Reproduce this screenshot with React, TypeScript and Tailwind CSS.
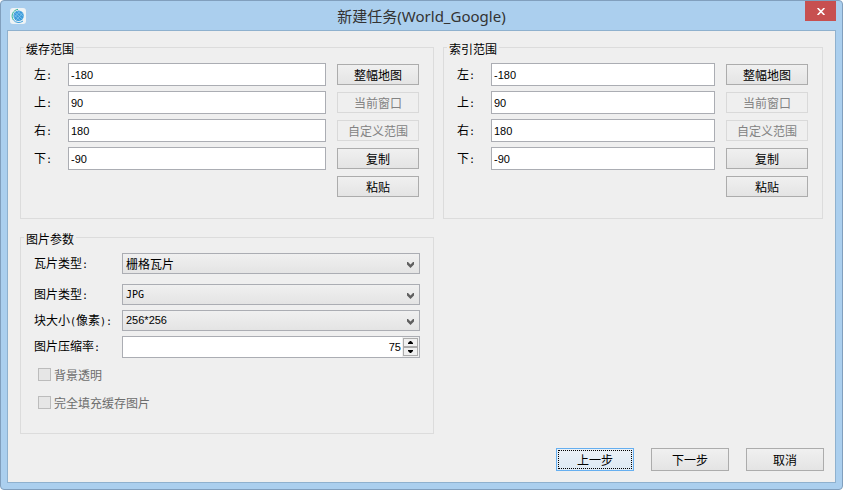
import { useState, type ReactNode } from "react";

const cjk = "font-['Noto_Sans_CJK_SC',sans-serif]";
const latin = "font-['DejaVu_Sans_Mono','Noto_Sans_CJK_SC',monospace] text-[10px]";
const digits = "font-['Liberation_Sans','Noto_Sans_CJK_SC',sans-serif] text-[11px]";

function Half({ children }: { children: ReactNode }) {
  return <span className={latin}>{children}</span>;
}

function AppIcon() {
  return (
    <svg className="size-4" viewBox="0 0 16 16" aria-hidden="true">
      <rect width="16" height="16" rx="3" fill="#eef3f5" />
      <circle cx="8.6" cy="7.8" r="5.2" fill="#3a9ada" />
      <path
        d="M3.8 6.4 L10.5 12.6 M4.8 4.4 L12.8 11.4 M7 2.9 L13.6 8.6 M3.9 9.8 L10.4 3 M6 12.2 L12.8 4.8"
        stroke="#8ccdf0"
        strokeWidth="0.7"
        fill="none"
      />
      <path d="M8 1.3 A6.8 6.8 0 0 0 3.4 12" stroke="#2fb596" strokeWidth="1" fill="none" />
      <path d="M3.4 12 A6.8 6.8 0 0 0 13 13" stroke="#3a9edb" strokeWidth="1" fill="none" />
    </svg>
  );
}

function Group({ title, className, children }: { title: string; className: string; children: ReactNode }) {
  return (
    <fieldset className={`min-w-0 border border-[#dcdcdc] pl-[13px] ${className}`}>
      <legend className="-ml-[10px] px-[2px] pt-[3px] leading-[14px]">{title}</legend>
      {children}
    </fieldset>
  );
}

function PushButton({ children, disabled, className }: { children: ReactNode; disabled?: boolean; className: string }) {
  return (
    <button
      type="button"
      disabled={disabled}
      className={`flex items-center justify-center border border-[#acacac] bg-linear-to-b from-[#f0f0f0] to-[#e4e4e4] leading-[14px] disabled:border-[#d9d9d9] disabled:bg-[#efefef] disabled:bg-none disabled:text-[#838383] ${className}`}
    >
      {children}
    </button>
  );
}

const edges = [
  { key: "left", label: "左", value: "-180", action: "整幅地图", disabled: false },
  { key: "top", label: "上", value: "90", action: "当前窗口", disabled: true },
  { key: "right", label: "右", value: "180", action: "自定义范围", disabled: true },
  { key: "bottom", label: "下", value: "-90", action: "复制", disabled: false },
];

function RangeGroup({ id, title }: { id: string; title: string }) {
  return (
    <Group title={title} className="h-[180px] pr-[14px]">
      <div className="flex flex-col gap-[5px] pt-[7px]">
        {edges.map((edge) => (
          <div key={edge.key} className="flex items-center">
            <label htmlFor={`${id}-${edge.key}`} className="w-[34px] shrink-0 leading-[14px]">
              {edge.label}
              <Half>:</Half>
            </label>
            <input
              id={`${id}-${edge.key}`}
              type="text"
              defaultValue={edge.value}
              className={`mr-[11px] h-[23px] min-w-0 flex-1 border border-[#abadb3] bg-white pl-[2px] outline-none ${digits}`}
            />
            <PushButton disabled={edge.disabled} className="h-[21px] w-[82px] shrink-0">
              {edge.action}
            </PushButton>
          </div>
        ))}
        <div className="flex h-[23px] items-center justify-end">
          <PushButton className="h-[21px] w-[82px]">粘贴</PushButton>
        </div>
      </div>
    </Group>
  );
}

function ComboRow({ id, label, options, fontClass }: { id: string; label: ReactNode; options: string[]; fontClass: string }) {
  return (
    <div className="flex items-center">
      <label htmlFor={id} className="w-[88px] shrink-0 leading-[14px]">
        {label}
      </label>
      <div className="relative min-w-0 flex-1">
        <select
          id={id}
          className={`block h-[21px] w-full appearance-none border border-[#abadb3] bg-linear-to-b from-[#f0f0f0] to-[#e4e4e4] pl-[3px] outline-none ${fontClass}`}
        >
          {options.map((option) => (
            <option key={option}>{option}</option>
          ))}
        </select>
        <svg className="pointer-events-none absolute top-[9px] right-[6px] h-[6px] w-[7px]" viewBox="0 0 7 6" aria-hidden="true">
          <path d="M0 0 H1 L3.5 2.6 L6 0 H7 V2.4 L3.5 6 L0 2.4 Z" fill="#606060" />
        </svg>
      </div>
    </div>
  );
}

function CheckRow({ label }: { label: string }) {
  return (
    <label className="flex h-[13px] items-center gap-[3px] pl-1 leading-[13px] text-[#6d6d6d]">
      <input type="checkbox" disabled className="size-[13px] shrink-0 appearance-none border border-[#bcbcbc] bg-[#e6e6e6]" />
      {label}
    </label>
  );
}

export default function App() {
  const [quality, setQuality] = useState(75);

  return (
    <div className={`min-h-screen bg-white text-[12px] text-black ${cjk}`}>
      <div className="rounded-[4px] border border-[#819fbd] bg-[#abcfee] px-[6px] pb-[6px]">
        <header className="grid h-[29px] grid-cols-[1fr_auto_1fr] items-center">
          <div className="pl-[3px]">
            <AppIcon />
          </div>
          <h1 className="font-['Noto_Sans','Noto_Sans_CJK_SC',sans-serif] text-[15px] leading-[20px] text-[#333]">
            新建任务(World_Google)
          </h1>
          <button
            type="button"
            aria-label="关闭"
            className="flex h-[20px] w-[31px] items-center justify-center self-start justify-self-end bg-[#c75050]"
          >
            <svg className="h-[7px] w-[8px]" viewBox="0 0 8 7" aria-hidden="true">
              <path d="M0.6 0 L7.4 7 M7.4 0 L0.6 7" stroke="#fff" strokeWidth="1.6" />
            </svg>
          </button>
        </header>

        <main className="border border-[#8fb1ce] bg-[#efefef] pt-2 pb-[11px]">
          <div className="grid grid-cols-[414fr_380fr] gap-x-[9px] gap-y-[10px] px-3">
            <RangeGroup id="cache" title="缓存范围" />
            <RangeGroup id="index" title="索引范围" />

            <Group title="图片参数" className="pr-[13px] pb-6">
              <div className="flex flex-col gap-[10px] pt-[7px]">
                <ComboRow id="tile-type" label={<>瓦片类型<Half>:</Half></>} options={["栅格瓦片", "矢量瓦片"]} fontClass={cjk} />
                <div className="flex flex-col gap-[5px]">
                  <ComboRow id="image-type" label={<>图片类型<Half>:</Half></>} options={["JPG", "PNG"]} fontClass={latin} />
                  <ComboRow
                    id="block-size"
                    label={<>块大小<Half>(</Half>像素<Half>):</Half></>}
                    options={["256*256", "512*512"]}
                    fontClass={digits}
                  />
                  <div className="flex items-center">
                    <label htmlFor="quality" className="w-[88px] shrink-0 leading-[14px]">
                      图片压缩率<Half>:</Half>
                    </label>
                    <div className="flex h-[22px] min-w-0 flex-1 border border-[#abadb3] bg-[#efefef] pr-px">
                      <input
                        id="quality"
                        type="text"
                        inputMode="numeric"
                        value={quality}
                        onChange={(event) => setQuality(Number(event.target.value) || 0)}
                        className={`min-w-0 flex-1 bg-white pr-px text-right outline-none ${digits}`}
                      />
                      <div className="ml-px flex flex-col py-px">
                        <button
                          type="button"
                          aria-label="增加"
                          onClick={() => setQuality(Math.min(100, quality + 1))}
                          className="flex w-[15px] flex-1 items-center justify-center border border-[#acacac] bg-[#f0f0f0]"
                        >
                          <svg className="h-[3px] w-[5px]" viewBox="0 0 5 3" aria-hidden="true">
                            <path d="M2 0 H3 L5 2 V3 H0 V2 Z" fill="#000" />
                          </svg>
                        </button>
                        <button
                          type="button"
                          aria-label="减少"
                          onClick={() => setQuality(Math.max(0, quality - 1))}
                          className="flex w-[15px] flex-1 items-center justify-center border border-[#acacac] bg-[#f0f0f0]"
                        >
                          <svg className="h-[3px] w-[5px]" viewBox="0 0 5 3" aria-hidden="true">
                            <path d="M0 0 H5 V1 L3 3 H2 L0 1 Z" fill="#000" />
                          </svg>
                        </button>
                      </div>
                    </div>
                  </div>
                </div>
                <div className="flex flex-col gap-[15px]">
                  <CheckRow label="背景透明" />
                  <CheckRow label="完全填充缓存图片" />
                </div>
              </div>
            </Group>
          </div>

          <footer className="mt-[14px] flex justify-end gap-[17px] pr-[11px]">
            <button
              type="button"
              className="h-[23px] w-[78px] border border-[#66aff0] bg-linear-to-b from-[#ebf1f7] to-[#dde9f4] p-px"
            >
              <span className="flex h-full items-center justify-center border border-dotted border-black leading-[14px]">
                上一步
              </span>
            </button>
            <PushButton className="h-[23px] w-[78px]">下一步</PushButton>
            <PushButton className="h-[23px] w-[78px]">取消</PushButton>
          </footer>
        </main>
      </div>
    </div>
  );
}
